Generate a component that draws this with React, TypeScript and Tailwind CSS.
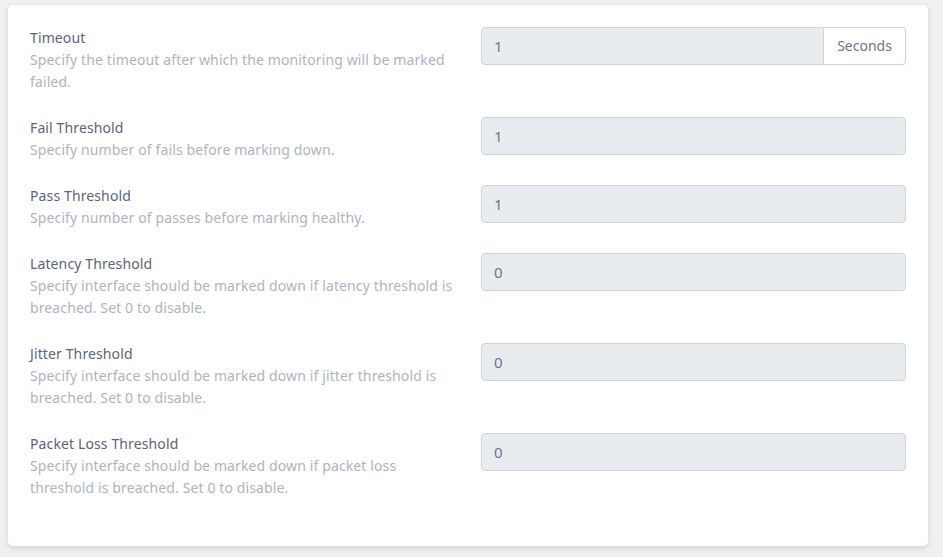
import React from "react";

type Row = { label: string; desc: string; value: string; addon?: string };

const rows: Row[] = [
  { label: "Timeout", desc: "Specify the timeout after which the monitoring will be marked failed.", value: "1", addon: "Seconds" },
  { label: "Fail Threshold", desc: "Specify number of fails before marking down.", value: "1" },
  { label: "Pass Threshold", desc: "Specify number of passes before marking healthy.", value: "1" },
  { label: "Latency Threshold", desc: "Specify interface should be marked down if latency threshold is breached. Set 0 to disable.", value: "0" },
  { label: "Jitter Threshold", desc: "Specify interface should be marked down if jitter threshold is breached. Set 0 to disable.", value: "0" },
  { label: "Packet Loss Threshold", desc: "Specify interface should be marked down if packet loss threshold is breached. Set 0 to disable.", value: "0" },
];

export default function App() {
  return (
    <div
      className="w-[943px] h-[557px] bg-[#eef0f1] pt-[5px] pl-[8px] overflow-hidden"
      style={{ fontFamily: '"Noto Sans", sans-serif' }}
    >
      <div className="w-[920px] h-[541px] bg-white rounded-[5px] shadow-[0_2px_6px_rgba(0,0,0,0.12)] px-[22px] pt-[22px]">
        {rows.map((r) => (
          <div key={r.label} className="flex mb-[24px]">
            <div className="w-[427px] text-[14px] leading-[22px] tracking-[0.12px]">
              <div className="text-[#5c6478]">{r.label}</div>
              <div className="text-[#aeb4bf]">{r.desc}</div>
            </div>
            <div className="ml-[24px] w-[425px] flex h-[38px]">
              <div
                className={`flex-1 flex items-center bg-[#e9ecef] border border-[#ced4da] px-[12px] text-[15px] text-[#6c7589] ${
                  r.addon ? "rounded-l-[4px]" : "rounded-[4px]"
                }`}
              >
                {r.value}
              </div>
              {r.addon && (
                <div className="w-[82px] flex items-center justify-center bg-white border border-l-0 border-[#ced4da] rounded-r-[4px] text-[14px] text-[#6c7589] pb-[1px]">
                  {r.addon}
                </div>
              )}
            </div>
          </div>
        ))}
      </div>
    </div>
  );
}
